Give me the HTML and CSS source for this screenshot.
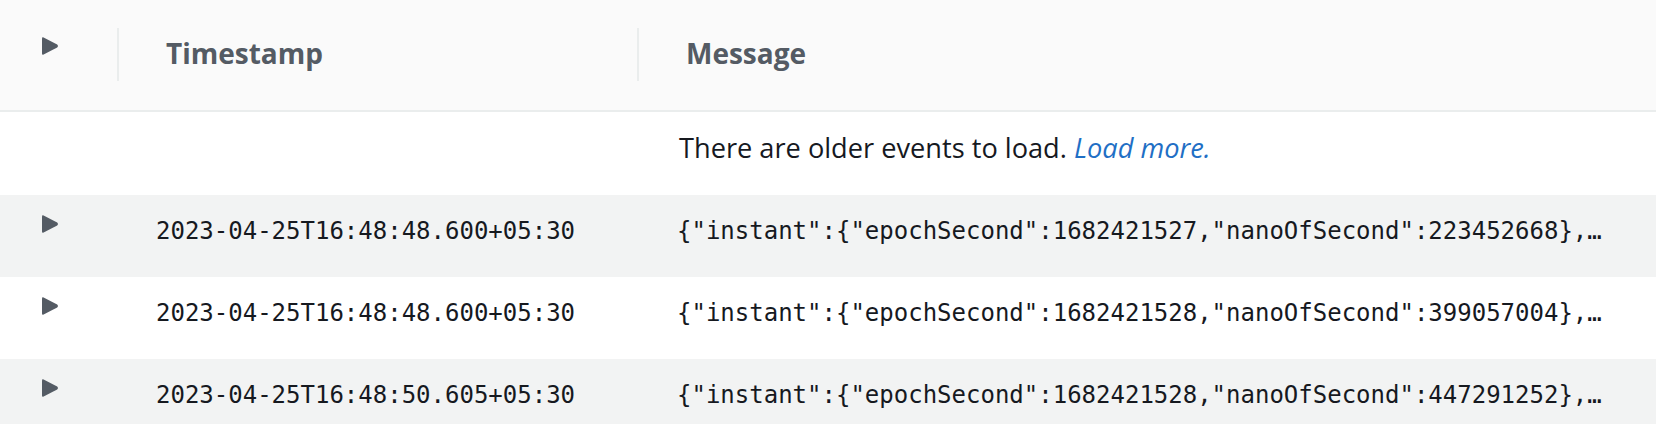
FILE: index.html
```html
<!DOCTYPE html>
<html>
<head>
<meta charset="utf-8">
<link rel="stylesheet" href="styles.css">
</head>
<body>
<div class="table">
  <div class="row head">
    <div class="cell c-toggle"><svg class="tri" viewBox="0 0 18 20"><path d="M2.6 1.4 L16.2 8.5 Q18 10 16.2 11.5 L2.6 18.6 Q1 19.3 1 17.5 L1 2.5 Q1 0.7 2.6 1.4 Z"/></svg></div>
    <div class="cell c-time"><span class="sep"></span><span class="htext">Timestamp</span></div>
    <div class="cell c-msg"><span class="sep"></span><span class="htext">Message</span></div>
  </div>
  <div class="row load">
    <div class="cell c-toggle"></div>
    <div class="cell c-time"></div>
    <div class="cell c-msg"><span class="loadtext">There are older events to load. <a class="more" href="#">Load more.</a></span></div>
  </div>
  <div class="row data odd">
    <div class="cell c-toggle"><svg class="tri" viewBox="0 0 18 20"><path d="M2.6 1.4 L16.2 8.5 Q18 10 16.2 11.5 L2.6 18.6 Q1 19.3 1 17.5 L1 2.5 Q1 0.7 2.6 1.4 Z"/></svg></div>
    <div class="cell c-time mono">2023-04-25T16:48:48.600+05:30</div>
    <div class="cell c-msg mono"><span class="trunc">{"instant":{"epochSecond":1682421527,"nanoOfSecond":223452668},"thread":"main","level":"INFO"}</span></div>
  </div>
  <div class="row data">
    <div class="cell c-toggle"><svg class="tri" viewBox="0 0 18 20"><path d="M2.6 1.4 L16.2 8.5 Q18 10 16.2 11.5 L2.6 18.6 Q1 19.3 1 17.5 L1 2.5 Q1 0.7 2.6 1.4 Z"/></svg></div>
    <div class="cell c-time mono">2023-04-25T16:48:48.600+05:30</div>
    <div class="cell c-msg mono"><span class="trunc">{"instant":{"epochSecond":1682421528,"nanoOfSecond":399057004},"thread":"main","level":"INFO"}</span></div>
  </div>
  <div class="row data odd">
    <div class="cell c-toggle"><svg class="tri" viewBox="0 0 18 20"><path d="M2.6 1.4 L16.2 8.5 Q18 10 16.2 11.5 L2.6 18.6 Q1 19.3 1 17.5 L1 2.5 Q1 0.7 2.6 1.4 Z"/></svg></div>
    <div class="cell c-time mono">2023-04-25T16:48:50.605+05:30</div>
    <div class="cell c-msg mono"><span class="trunc">{"instant":{"epochSecond":1682421528,"nanoOfSecond":447291252},"thread":"main","level":"INFO"}</span></div>
  </div>
</div>
</body>
</html>
```
FILE: styles.css
```css
* { box-sizing: border-box; }
html, body { margin: 0; padding: 0; background: #ffffff; }
body {
  width: 1656px;
  height: 424px;
  overflow: hidden;
  font-family: "Open Sans", "Noto Sans", sans-serif;
  color: #16191f;
}
.table { display: flex; flex-direction: column; }
.row {
  display: grid;
  grid-template-columns: 117px 520px 1fr;
}
.head {
  height: 112px;
  background: #fafafa;
  border-bottom: 2px solid #eaeded;
}
.load { height: 83px; background: #ffffff; }
.data { height: 82px; background: #ffffff; }
.data.odd { background: #f2f3f3; }
.cell { display: flex; align-items: center; min-width: 0; }
.c-toggle { padding-left: 41px; align-items: flex-start; }
.head .c-toggle { padding-top: 36px; }
.data .c-toggle { padding-top: 19px; }
.tri { width: 18px; height: 20px; fill: #545b64; display: block; }
.sep {
  width: 2px;
  height: 53px;
  background: #eaeded;
  margin-bottom: 2px;
}
.htext {
  margin-left: 47px;
  font-weight: 700;
  font-size: 28px;
  color: #545b64;
  margin-bottom: 4px;
}
.loadtext {
  margin-left: 42px;
  font-size: 27.2px;
  color: #16191f;
  margin-bottom: 12px;
}
.more {
  font-style: italic;
  color: #1f6fc5;
  text-decoration: none;
}
.mono {
  font-family: "DejaVu Sans Mono", "Liberation Mono", monospace;
  font-size: 24px;
  color: #16191f;
  padding-bottom: 10px;
}
.data .c-time { padding-left: 39px; }
.data .c-msg { padding-left: 40px; }
.trunc {
  display: block;
  width: 930px;
  white-space: nowrap;
  overflow: hidden;
  text-overflow: ellipsis;
}
```
